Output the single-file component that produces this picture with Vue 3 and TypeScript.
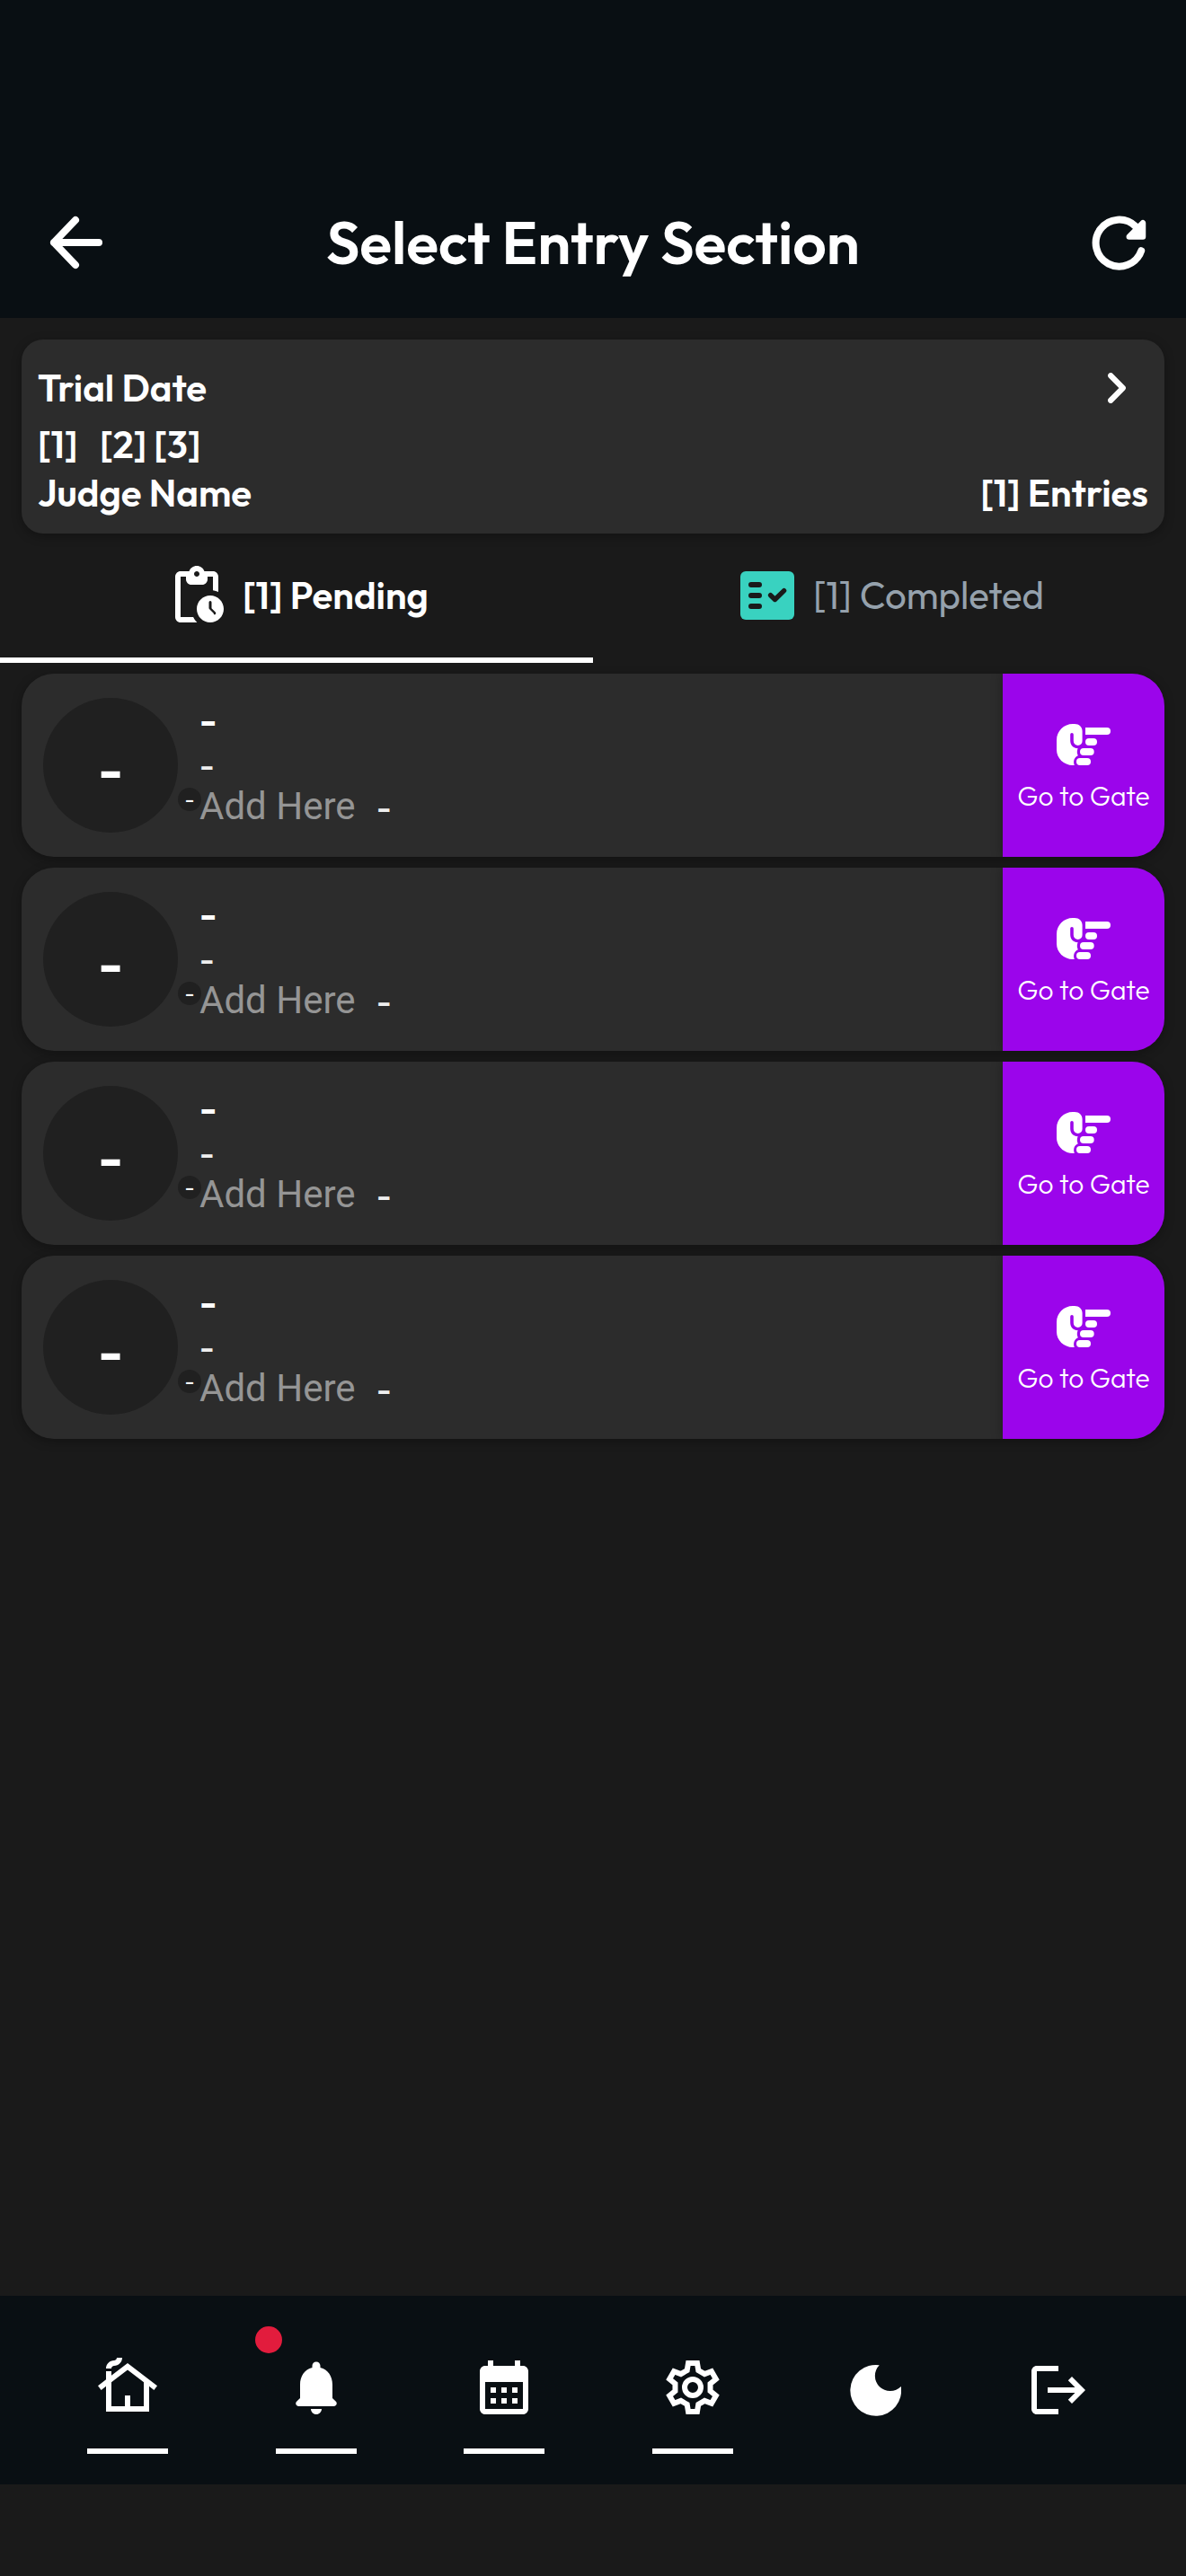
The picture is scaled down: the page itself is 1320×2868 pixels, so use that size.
<script setup lang="ts">
interface Entry {
  position: string
  name: string
  detail: string
  badge: string
  note: string
}

const blank: Entry = { position: '-', name: '-', detail: '-', badge: '-', note: '-' }
const entries: Entry[] = Array.from({ length: 4 }, () => ({ ...blank }))
const sections = '[1]\u00a0\u00a0\u00a0[2] [3]'

const gearPoints: string = Array.from({ length: 6 }, (_, k) => {
  const a = (k * Math.PI) / 3
  const tooth: [number, number][] = [[-2.1, -6.3], [-1.65, -9], [1.65, -9], [2.1, -6.3]]
  return tooth
    .map(([x, y]) => {
      const px = 12 + x * Math.cos(a) - y * Math.sin(a)
      const py = 12 + x * Math.sin(a) + y * Math.cos(a)
      return `${px.toFixed(2)},${py.toFixed(2)}`
    })
    .join(' ')
}).join(' ')
</script>

<template>
  <div class="screen">
    <header class="top">
      <svg class="back" width="60" height="60" viewBox="0 0 60 60">
        <path d="M55 30H5M29 5L5 30L29 55" fill="none" stroke="#fff" stroke-width="8" stroke-linecap="round" stroke-linejoin="round" />
      </svg>
      <h1>Select Entry Section</h1>
      <svg class="refresh" width="62" height="62" viewBox="0 0 62 62">
        <path d="M56.2 40.2A26 26 0 1 1 50 13.2L54 17" fill="none" stroke="#fff" stroke-width="8" stroke-linecap="round" />
        <path d="M58 9.2V24.5H42.8Z" fill="#fff" stroke="#fff" stroke-width="6.5" stroke-linejoin="round" />
      </svg>
    </header>

    <section class="trial">
      <div class="line first">
        <span>Trial Date</span>
        <svg class="chev" width="20" height="34" viewBox="0 0 20 34">
          <path d="M3.2 3.2L16.8 17L3.2 30.8" fill="none" stroke="#fff" stroke-width="6.2" stroke-linecap="round" stroke-linejoin="round" />
        </svg>
      </div>
      <div class="line second"><span>{{ sections }}</span></div>
      <div class="line third"><span>Judge Name</span><span>[1] Entries</span></div>
    </section>

    <nav class="tabs">
      <div class="tab active">
        <svg width="72" height="72" viewBox="0 0 24 24" fill="#fff">
          <path d="M16 12c-2.76 0-5 2.24-5 5s2.24 5 5 5 5-2.24 5-5-2.24-5-5-5zm1.3 6.65-1.65-1.65a.5.5 0 0 1-.15-.35V14.5a.5.5 0 0 1 1 0v2.29l1.5 1.5a.5.5 0 0 1-.7.7zM17 3h-3.18C13.4 1.84 12.3 1 11 1s-2.4.84-2.82 2H5c-1.1 0-2 .9-2 2v15c0 1.1.9 2 2 2h6.11c-.59-.57-1.07-1.25-1.42-2H5V5h2v1c0 1.1.9 2 2 2h4c1.1 0 2-.9 2-2V5h2v5.08c.71.1 1.38.31 2 .6V5c0-1.1-.9-2-2-2zm-6 2c-.55 0-1-.45-1-1s.45-1 1-1 1 .45 1 1-.45 1-1 1z" />
        </svg>
        <span>[1] Pending</span>
      </div>
      <div class="tab idle">
        <svg width="72" height="72" viewBox="0 0 24 24">
          <rect x="2" y="3" width="20" height="18" rx="2" fill="#39d2c0" />
          <path d="M6 8h3M6 12h3M6 16h3" stroke="#1a1a1a" stroke-width="2" stroke-linecap="round" />
          <path d="M13.2 11.9L14.83 13.5L18.2 10.2" fill="none" stroke="#1a1a1a" stroke-width="1.8" stroke-linecap="round" stroke-linejoin="round" />
        </svg>
        <span>[1] Completed</span>
      </div>
    </nav>

    <main class="list">
      <article v-for="(e, i) in entries" :key="i" class="row">
        <div class="avatar">{{ e.position }}</div>
        <div class="badge">{{ e.badge }}</div>
        <div class="info">
          <div class="name">{{ e.name }}</div>
          <div class="detail">{{ e.detail }}</div>
          <div class="note"><span class="add">Add Here</span><span class="dash">{{ e.note }}</span></div>
        </div>
        <button class="gate">
          <svg width="60" height="46" viewBox="0 0 60 46" fill="#fff">
            <path d="M0 18C0 8 8 0 18 0H20C25 0 28.6 3.5 28.6 8V19A4.9 4.9 0 0 1 18.8 19V11.7A1.8 1.8 0 0 0 15.2 11.7V18.5C15.2 23.5 18.5 27 23.7 27.3C22.5 29.5 22.5 33 23.8 35.2C19.8 37 18 41 19.8 46H18C8 46 0 38 0 29Z" />
            <path d="M32 4H56A4 4 0 0 1 56 12H32Z" />
            <rect x="32" y="16" width="13" height="8" rx="4" />
            <rect x="26" y="27" width="15.7" height="8" rx="4" />
            <rect x="22" y="38" width="16" height="8" rx="4" />
          </svg>
          <span>Go to Gate</span>
        </button>
      </article>
    </main>

    <footer class="bottom">
      <div class="item">
        <svg width="72" height="72" viewBox="0 0 24 24" fill="#fff">
          <path d="M12 3L6 7.58V6H4v3.11L1 11.4l1.21 1.59L4 11.62V21h16v-9.38l1.79 1.36L23 11.4L12 3zM18 19h-5v-4h-2v4H6v-8.9l6-4.58 6 4.58V19zM10 1c0 1.66-1.34 3-3 3-.55 0-1 .45-1 1H4c0-1.66 1.34-3 3-3 .55 0 1-.45 1-1h2z" />
        </svg>
        <i class="bar"></i>
      </div>
      <div class="item">
        <i class="alert"></i>
        <svg width="72" height="72" viewBox="0 0 24 24" fill="#fff">
          <path d="M12 22c1.1 0 2-.9 2-2h-4c0 1.1.89 2 2 2zm6-6v-5c0-3.07-1.64-5.64-4.5-6.32V4c0-.83-.67-1.5-1.5-1.5s-1.5.67-1.5 1.5v.68C7.63 5.36 6 7.92 6 11v5l-1.29 1.29c-.63.63-.19 1.71.7 1.71h13.17c.89 0 1.34-1.08.71-1.71L18 16z" />
        </svg>
        <i class="bar"></i>
      </div>
      <div class="item">
        <svg width="72" height="72" viewBox="0 0 24 24" fill="#fff">
          <path d="M19 4h-1V2h-2v2H8V2H6v2H5c-1.11 0-1.99.9-1.99 2L3 20c0 1.1.89 2 2 2h14c1.1 0 2-.9 2-2V6c0-1.1-.9-2-2-2zm0 16H5V10h14v10zM9 14H7v-2h2v2zm4 0h-2v-2h2v2zm4 0h-2v-2h2v2zm-8 4H7v-2h2v2zm4 0h-2v-2h2v2zm4 0h-2v-2h2v2z" />
        </svg>
        <i class="bar"></i>
      </div>
      <div class="item">
        <svg width="72" height="72" viewBox="0 0 24 24" fill="none" stroke="#fff" stroke-width="2">
          <polygon :points="gearPoints" />
          <circle cx="12" cy="12" r="3" />
        </svg>
        <i class="bar"></i>
      </div>
      <div class="item moon">
        <svg width="57" height="57" viewBox="0 0 57 57" fill="#fff">
          <path d="M32.7 0.3A28.4 28.4 0 1 0 56.8 24A16.3 16.3 0 1 1 32.7 0.3Z" />
        </svg>
      </div>
      <div class="item exit">
        <svg width="72" height="72" viewBox="0 0 24 24" fill="#fff">
          <path d="M17 7l-1.41 1.41L18.17 11H8v2h10.17l-2.58 2.58L17 17l5-5zM4 5h8V3H4c-1.1 0-2 .9-2 2v14c0 1.1.9 2 2 2h8v-2H4V5z" />
        </svg>
      </div>
    </footer>
  </div>
</template>

<style>
body {
  margin: 0;
  background: #1a1a1a;
}
</style>

<style scoped>
.screen {
  width: 1320px;
  height: 2868px;
  background: #1a1a1a;
  color: #fff;
  font-family: Outfit, Inter, sans-serif;
  display: flex;
  flex-direction: column;
  overflow: hidden;
}
svg {
  display: block;
  flex: none;
}
span {
  white-space: nowrap;
}
.top {
  box-sizing: border-box;
  height: 354px;
  flex: none;
  padding: 186px 44px 0 55px;
  background: #090f13;
  display: flex;
  align-items: center;
}
h1 {
  flex: 1;
  margin: -1px 9px 0 0;
  text-align: center;
  font-size: 66px;
  line-height: 83px;
  font-weight: 600;
}
.trial {
  box-sizing: border-box;
  height: 216px;
  flex: none;
  margin: 24px 24px 0;
  padding: 27px 18px;
  background: #2c2c2c;
  border-radius: 24px;
  box-shadow: 0 3px 12px rgba(0, 0, 0, 0.3);
  font-size: 42px;
  font-weight: 600;
  line-height: 53px;
}
.line {
  display: flex;
  justify-content: space-between;
}
.first {
  height: 54px;
}
.chev {
  margin: 10px 25px 0 0;
}
.second {
  box-sizing: border-box;
  height: 63px;
  padding-top: 9px;
}
.third {
  height: 53px;
}
.tabs {
  display: flex;
  height: 144px;
  flex: none;
}
.tab {
  box-sizing: border-box;
  width: 660px;
  display: flex;
  align-items: center;
  justify-content: center;
  border-bottom: 6px solid transparent;
  font-size: 42px;
  line-height: 53px;
}
.tab span {
  margin-top: -1px;
}
.active {
  padding-left: 3px;
  gap: 12px;
  color: #fff;
  font-weight: 600;
  border-color: #fff;
}
.idle {
  gap: 15px;
  color: #95a1ac;
}
.list {
  flex: 1;
  padding: 12px 24px 0;
  display: flex;
  flex-direction: column;
  gap: 12px;
}
.row {
  height: 204px;
  display: flex;
  background: #2c2c2c;
  border-radius: 36px;
  overflow: hidden;
  box-shadow: 0 3px 12px rgba(0, 0, 0, 0.3);
}
.avatar {
  box-sizing: border-box;
  width: 150px;
  height: 150px;
  margin: 27px 0 0 24px;
  padding-top: 4px;
  border-radius: 50%;
  background: #202020;
  text-align: center;
  font-size: 60px;
  font-weight: 600;
  line-height: 150px;
}
.badge {
  width: 26px;
  height: 26px;
  margin-top: 127px;
  border-radius: 50%;
  background: #202020;
  text-align: center;
  font-size: 24px;
  line-height: 25px;
}
.info {
  flex: 1;
  margin-left: -2px;
}
.name {
  margin-top: 24px;
  height: 54px;
  line-height: 53px;
  font-size: 42px;
  font-weight: 600;
}
.detail {
  height: 45px;
  line-height: 45px;
  font-size: 36px;
  font-weight: 500;
  color: #eee;
}
.note {
  display: flex;
  align-items: flex-start;
}
.add {
  font: 400 42px/49px Roboto, sans-serif;
  color: #959595;
}
.dash {
  margin: 2px 0 0 23.5px;
  font-size: 36px;
  font-weight: 500;
  line-height: 45px;
  color: #eee;
}
.gate {
  box-sizing: border-box;
  width: 180px;
  padding: 56px 0 0;
  border: 0;
  background: #9b05eb;
  color: #fff;
  font-family: inherit;
  font-size: 30px;
  font-weight: 300;
  line-height: 38px;
  display: flex;
  flex-direction: column;
  align-items: center;
  gap: 15px;
  box-shadow: 0 0 12px rgba(0, 0, 0, 0.3);
}
.bottom {
  box-sizing: border-box;
  height: 210px;
  flex: none;
  margin-bottom: 102px;
  padding: 66px 97px 0;
  background: #090f13;
  display: flex;
  justify-content: space-between;
}
.item {
  position: relative;
  width: 90px;
  display: flex;
  flex-direction: column;
  align-items: center;
}
.bar {
  width: 90px;
  height: 6px;
  margin-top: 32px;
  background: #fff;
}
.alert {
  position: absolute;
  left: -22.5px;
  top: -32px;
  width: 30px;
  height: 30px;
  border-radius: 50%;
  background: #e21c3d;
}
.moon {
  width: 78px;
  padding-top: 11px;
}
.exit {
  padding-top: 3px;
}
</style>
